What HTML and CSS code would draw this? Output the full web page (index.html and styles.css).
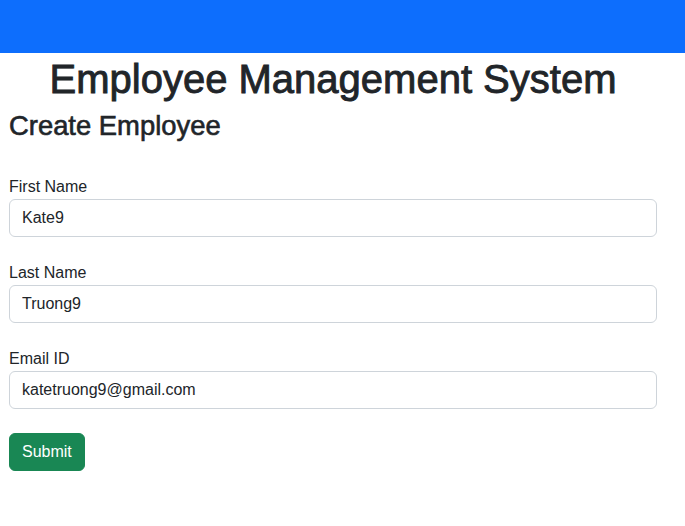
FILE: index.html
```html
<!DOCTYPE html>
<html>
<head>
<meta charset="utf-8">
<link rel="stylesheet" href="styles.css">
</head>
<body>
<header class="topbar"></header>
<main class="content">
  <h1 class="title">Employee Management System</h1>
  <h2 class="subtitle">Create Employee</h2>
  <form class="form">
    <div class="group">
      <label class="label">First Name</label>
      <input class="input" type="text" value="Kate9">
    </div>
    <div class="group">
      <label class="label">Last Name</label>
      <input class="input" type="text" value="Truong9">
    </div>
    <div class="group">
      <label class="label">Email ID</label>
      <input class="input" type="text" value="katetruong9@gmail.com">
    </div>
    <button class="btn" type="button">Submit</button>
  </form>
</main>
</body>
</html>
```
FILE: styles.css
```css
* { box-sizing: border-box; }
html, body { margin: 0; padding: 0; }
body {
  font-family: "Liberation Sans", Arial, sans-serif;
  font-size: 16px;
  line-height: 1.5;
  color: #212529;
  background: #fff;
}
.topbar {
  height: 53px;
  background: #0d6efd;
}
.content {
  padding: 2px 28px 0 9px;
}
.title {
  margin: 0 0 6px;
  text-align: center;
  font-size: 40px;
  font-weight: 500;
  line-height: 48px;
  -webkit-text-stroke: 0.9px #212529;
}
.subtitle {
  margin: 0 0 33px;
  font-size: 27.4px;
  font-weight: 500;
  line-height: 33px;
  -webkit-text-stroke: 0.6px #212529;
}
.form {
  display: flex;
  flex-direction: column;
  gap: 24px;
  align-items: flex-start;
}
.group {
  display: flex;
  flex-direction: column;
  align-self: stretch;
}
.label {
  display: block;
  line-height: 24px;
}
.input {
  display: block;
  width: 100%;
  height: 38px;
  padding: 6px 12px;
  font: inherit;
  color: #212529;
  border: 1px solid #ced4da;
  border-radius: 6px;
  background: #fff;
}
.btn {
  height: 38px;
  padding: 6px 12px;
  font: inherit;
  color: #fff;
  background: #198754;
  border: 1px solid #198754;
  border-radius: 6px;
}
```
